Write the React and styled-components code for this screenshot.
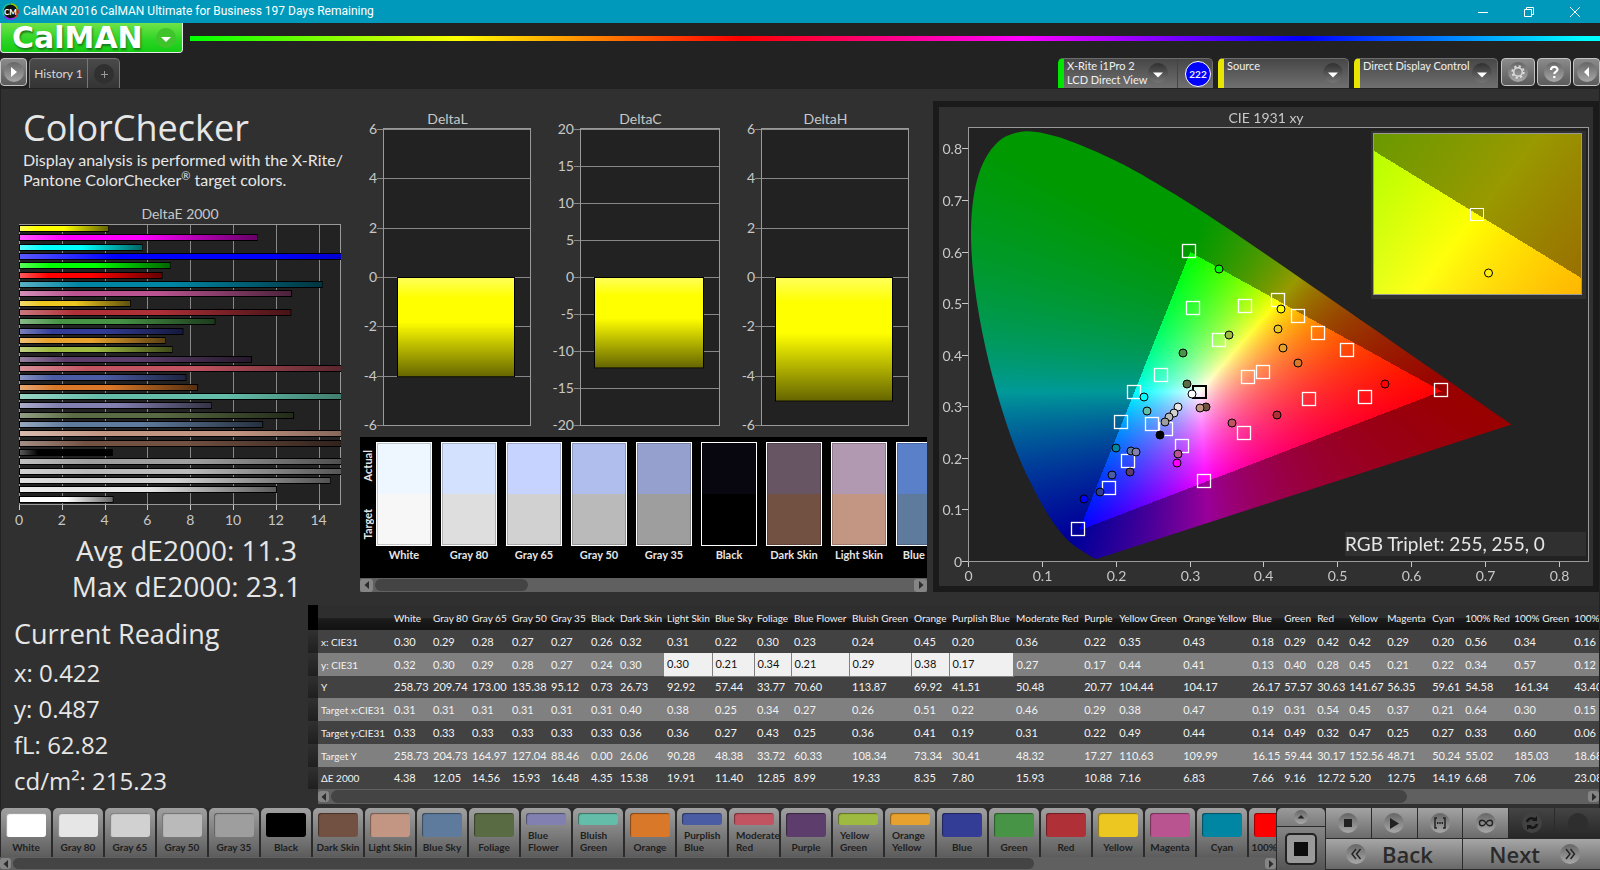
import React, { useEffect, useRef } from "react";
import styled, { createGlobalStyle, css } from "styled-components";

const Global = createGlobalStyle`
  *, *::before, *::after { box-sizing: border-box; }
  body { margin: 0; background: #222; color: #e6e6e6; font-family: "Open Sans", "Noto Sans", sans-serif; }
  button { font: inherit; color: inherit; padding: 0; margin: 0; border: 0; background: none; cursor: pointer; }
`;

const sans = '"Open Sans", "Noto Sans", sans-serif';
const humanist = 'Lato, "Open Sans", sans-serif';

/* ---------- data ---------- */

const patches = [
  { name: "White", color: "#ffffff", actual: "#eef7ff", target: "#f7f7f7", w: 39, v: ["0.30", "0.32", "258.73", "0.31", "0.33", "258.73", "4.38"] },
  { name: "Gray 80", color: "#e6e6e6", actual: "#d3e1ff", target: "#dedede", w: 39, v: ["0.29", "0.30", "209.74", "0.31", "0.33", "204.73", "12.05"] },
  { name: "Gray 65", color: "#d1d1d1", actual: "#c6d3ff", target: "#d1d1d1", w: 40, v: ["0.28", "0.29", "173.00", "0.31", "0.33", "164.97", "14.56"] },
  { name: "Gray 50", color: "#bababa", actual: "#b0beed", target: "#bababa", w: 39, v: ["0.27", "0.28", "135.38", "0.31", "0.33", "127.04", "15.93"] },
  { name: "Gray 35", color: "#9e9e9e", actual: "#95a0cf", target: "#9e9e9e", w: 40, v: ["0.27", "0.27", "95.12", "0.31", "0.33", "88.46", "16.48"] },
  { name: "Black", color: "#000000", actual: "#08060f", target: "#000000", w: 29, v: ["0.26", "0.24", "0.73", "0.31", "0.33", "0.00", "4.35"] },
  { name: "Dark Skin", color: "#735142", actual: "#675564", target: "#735142", w: 47, v: ["0.32", "0.30", "26.73", "0.40", "0.36", "26.06", "15.38"] },
  { name: "Light Skin", color: "#c29682", actual: "#b199b1", target: "#c29682", w: 48, v: ["0.31", "0.30", "92.92", "0.38", "0.36", "90.28", "19.91"] },
  { name: "Blue Sky", color: "#5e7a9c", actual: "#5a80ca", target: "#5e7a9c", w: 42, v: ["0.22", "0.21", "57.44", "0.25", "0.27", "48.38", "11.40"] },
  { name: "Foliage", color: "#596b42", w: 37, v: ["0.30", "0.34", "33.77", "0.34", "0.43", "33.72", "12.85"] },
  { name: "Blue Flower", two: true, color: "#8280b0", w: 58, v: ["0.23", "0.21", "70.60", "0.27", "0.25", "60.33", "8.99"] },
  { name: "Bluish Green", two: true, color: "#63bda8", w: 62, v: ["0.24", "0.29", "113.87", "0.26", "0.36", "108.34", "19.33"] },
  { name: "Orange", color: "#d97829", w: 38, v: ["0.45", "0.38", "69.92", "0.51", "0.41", "73.34", "8.35"] },
  { name: "Purplish Blue", two: true, color: "#4a5ca3", w: 64, v: ["0.20", "0.17", "41.51", "0.22", "0.19", "30.41", "7.80"] },
  { name: "Moderate Red", two: true, color: "#c25461", w: 68, v: ["0.36", "0.27", "50.48", "0.46", "0.31", "48.32", "15.93"] },
  { name: "Purple", color: "#5c3d6b", w: 35, v: ["0.22", "0.17", "20.77", "0.29", "0.22", "17.27", "10.88"] },
  { name: "Yellow Green", two: true, color: "#9eba40", w: 64, v: ["0.35", "0.44", "104.44", "0.38", "0.49", "110.63", "7.16"] },
  { name: "Orange Yellow", two: true, color: "#e6a12e", w: 69, v: ["0.43", "0.41", "104.17", "0.47", "0.44", "109.99", "6.83"] },
  { name: "Blue", color: "#333d96", w: 32, v: ["0.18", "0.13", "26.17", "0.19", "0.14", "16.15", "7.66"] },
  { name: "Green", color: "#479447", w: 33, v: ["0.29", "0.40", "57.57", "0.31", "0.49", "59.44", "9.16"] },
  { name: "Red", color: "#b03038", w: 32, v: ["0.42", "0.28", "30.63", "0.54", "0.32", "30.17", "12.72"] },
  { name: "Yellow", color: "#edc721", w: 38, v: ["0.42", "0.45", "141.67", "0.45", "0.47", "152.56", "5.20"] },
  { name: "Magenta", color: "#ba5491", w: 45, v: ["0.29", "0.21", "56.35", "0.37", "0.25", "48.71", "12.75"] },
  { name: "Cyan", color: "#0085a3", w: 33, v: ["0.20", "0.22", "59.61", "0.21", "0.27", "50.24", "14.19"] },
  { name: "100% Red", color: "#ff0000", w: 49, v: ["0.56", "0.34", "54.58", "0.64", "0.33", "55.02", "6.68"] },
  { name: "100% Green", color: "#00ff00", w: 60, v: ["0.34", "0.57", "161.34", "0.30", "0.60", "185.03", "7.06"] },
  { name: "100% Blue", color: "#0000ff", w: 68, v: ["0.16", "0.12", "43.40", "0.15", "0.06", "18.68", "23.08"] },
];
const rowNames = ["x: CIE31", "y: CIE31", "Y", "Target x:CIE31", "Target y:CIE31", "Target Y", "ΔE 2000"];

const deltaE = [
  ["#ffff00", 4.16], ["#ff00ff", 11.15], ["#00ffff", 5.75],
  ...patches.map((p) => [p.color, parseFloat(p.v[6])]).reverse(),
];

const cieTargets = [
  [250, 144], [254, 201], [306, 199], [280, 233], [222, 268], [195, 285], [309, 270], [324, 265],
  [182, 315], [213, 317], [227, 322], [243, 339], [189, 354], [170, 381], [139, 422], [265, 374],
  [305, 326], [339, 193], [359, 209], [379, 226], [408, 243], [370, 292], [426, 290], [502, 283],
];
const cieReadings = [
  [280, 162, "#00ff00"], [290, 228, "#9eba40"], [244, 246, "#479447"], [248, 277, "#596b42"],
  [253, 287, "#ffffff"], [267, 300, "#735142"], [261, 301, "#c29682"], [239, 300, "#e6e6e6"],
  [235, 306, "#d1d1d1"], [230, 310, "#bababa"], [226, 315, "#9e9e9e"], [221, 328, "#000000"],
  [205, 290, "#00ffff"], [208, 304, "#63bda8"], [177, 341, "#0085a3"], [192, 344, "#5e7a9c"],
  [197, 345, "#8280b0"], [191, 365, "#5c3d6b"], [173, 368, "#4a5ca3"], [161, 385, "#333d96"],
  [145, 392, "#0000ff"], [239, 347, "#ba5491"], [238, 356, "#ff00ff"], [293, 316, "#c25461"],
  [338, 308, "#b03038"], [342, 202, "#ffff00"], [339, 222, "#edc721"], [344, 241, "#e6a12e"],
  [359, 256, "#d97829"], [446, 277, "#ff0000"],
];
const locus = [
  [0.1741, 0.005], [0.1714, 0.0051], [0.1689, 0.0069], [0.1644, 0.0109], [0.1566, 0.0177], [0.144, 0.0297],
  [0.1355, 0.0399], [0.1241, 0.0578], [0.1096, 0.0868], [0.0913, 0.1327], [0.0687, 0.2007], [0.0454, 0.295],
  [0.0235, 0.4127], [0.0082, 0.5384], [0.0039, 0.6548], [0.0139, 0.7502], [0.0389, 0.812], [0.0743, 0.8338],
  [0.1142, 0.8262], [0.1547, 0.8059], [0.1929, 0.7816], [0.2296, 0.7543], [0.3016, 0.6923], [0.3731, 0.6245],
  [0.4441, 0.5547], [0.5125, 0.4866], [0.5752, 0.4242], [0.627, 0.3725], [0.6658, 0.334], [0.6915, 0.3083],
  [0.719, 0.2809], [0.7347, 0.2653],
];

/* ---------- window frame ---------- */

const Page = styled.div`
  min-height: 100vh;
  display: flex;
  flex-direction: column;
  overflow: hidden;
  background: #222;
`;
const TitleBar = styled.header`
  height: 23px;
  display: flex;
  align-items: center;
  padding-left: 2px;
  background: #0099bc;
  color: #fff;
  font: 12px/23px Roboto, sans-serif;
`;
const TitleText = styled.h1`
  flex: 1;
  margin: 0 0 0 4px;
  font: inherit;
`;
const WindowButtons = styled.div`
  display: flex;
  padding-right: 2px;
  button { width: 46px; height: 23px; display: grid; place-items: center; }
`;
const BrandBar = styled.div`
  height: 35px;
  display: flex;
  align-items: flex-start;
  gap: 7px;
`;
const BrandButton = styled.button`
  width: 183px;
  height: 30px;
  display: flex;
  align-items: center;
  justify-content: space-between;
  padding: 0 6px 0 11px;
  border: solid #e9e9e9;
  border-width: 0 1px 1px;
  border-radius: 0 0 4px 4px;
  background: linear-gradient(#6fe34a, #2bd423 60%, #14cc14);
  color: #fff;
  font: 700 30px/29px "DejaVu Sans", sans-serif;
  text-shadow: 1px 2px 2px #1b7a1b;
`;
const Spectrum = styled.div`
  flex: 1;
  height: 5px;
  margin-top: 13px;
  background: linear-gradient(90deg, #0f0, #ff0 19%, #f00 39%, #f0f 59%, #00f 79%, #0ff 99%);
`;
const TabBar = styled.nav`
  height: 31px;
  display: flex;
  align-items: flex-start;
`;
const TabSpacer = styled.div`
  flex: 1;
`;
const SquareButton = styled.button`
  width: ${(p) => p.$w}px;
  height: 28px;
  margin-right: ${(p) => p.$gap || 0}px;
  display: grid;
  place-items: center;
  border: 1px solid #c4c4c4;
  border-radius: 4px;
  background: linear-gradient(#8b8b8b, #5b5b5b);
`;
const TabGroup = styled.div`
  display: flex;
  height: 30px;
  border: 1px solid #777;
  border-bottom: 0;
  border-radius: 5px 5px 0 0;
  background: linear-gradient(#4a4a4a, #343434);
  font: 12px/29px ${humanist};
  color: #d8d8d8;
`;
const HistoryTab = styled.button`
  width: 57px;
`;
const AddTab = styled.button`
  width: 32px;
  display: grid;
  place-items: center;
  border-left: 1px solid #777;
`;
const Device = styled.button`
  width: ${(p) => p.$w}px;
  height: 30px;
  margin-right: ${(p) => p.$gap}px;
  display: flex;
  align-items: flex-start;
  overflow: hidden;
  border: 1px solid #6d6d6d;
  border-bottom: 0;
  border-left: 6px solid ${(p) => p.$accent};
  border-radius: 5px 5px 0 0;
  background: linear-gradient(#474747, #707070);
  padding-left: 3px;
  font: 11px/14px ${humanist};
  color: #f0f0f0;
  text-align: left;
`;
const DeviceText = styled.span`
  flex: 1;
  white-space: nowrap;
`;
const DeviceArrow = styled.span`
  flex: none;
  padding: 4px 5px 0 0;
  line-height: 0;
`;
const Counter = styled.span`
  flex: none;
  height: 30px;
  display: grid;
  place-items: center;
  border-left: 1px solid #444;
  padding: 0 1px 0 7px;
  margin-left: 4px;
  span {
    width: 26px;
    height: 26px;
    border: 1px solid #fff;
    border-radius: 50%;
    background: #00f;
    font: 700 10px/24px ${humanist};
    text-align: center;
  }
`;

/* ---------- work area ---------- */

const Workspace = styled.main`
  flex: 1;
  margin: 0 1px 0 1px;
  display: flex;
  flex-direction: column;
  background: #303030;
`;
const Analysis = styled.section`
  display: grid;
  grid-template-columns: minmax(0, 350fr) minmax(0, 582fr) minmax(0, 666fr);
  align-items: start;
`;
const Summary = styled.div`
  padding-top: 17px;
`;
const Heading = styled.h2`
  margin: 0 0 0 22px;
  font: 400 36px/44px ${sans};
  white-space: nowrap;
`;
const Blurb = styled.p`
  margin: 0 0 12px 22px;
  font: 16px/20px ${humanist};
  white-space: nowrap;
  sup { font-size: 11px; line-height: 1px; }
`;
const Chart = styled.svg`
  display: block;
  width: 100%;
  text { fill: #c8c8c8; font-family: ${humanist}; font-size: 14px; }
`;
const Totals = styled.div`
  padding: 2px 29px 1px 50px;
  text-align: center;
  font: 28px/36px ${sans};
  white-space: nowrap;
`;
const Middle = styled.div`
  padding: 19px 6px 0 9px;
`;
const Comparator = styled.div`
  display: flex;
  height: 141px;
  overflow: hidden;
  background: #000;
`;
const SideLabels = styled.div`
  flex: none;
  width: 16px;
  display: flex;
  flex-direction: column;
  padding-bottom: 26px;
  font: 700 11px/16px ${humanist};
  span { flex: 1; writing-mode: vertical-rl; transform: rotate(180deg); text-align: center; }
`;
const Pair = styled.figure`
  flex: none;
  width: 56px;
  margin: 5px 9px 0 0;
  font: 700 11px/17px ${humanist};
  text-align: center;
  white-space: nowrap;
`;
const PairSwatch = styled.div`
  height: 104px;
  border: 1px solid #fff;
  background: linear-gradient(${(p) => p.$actual} 50%, ${(p) => p.$target} 50%);
  box-shadow: inset 0 0 0 1px #0003;
`;
const ScrollTrack = styled.div`
  height: ${(p) => p.$h}px;
  display: flex;
  align-items: center;
  justify-content: space-between;
  background: #606060;
`;
const ScrollArrow = styled.button`
  flex: none;
  width: ${(p) => p.$s}px;
  height: ${(p) => p.$s}px;
  display: grid;
  place-items: center;
  border-radius: 3px;
  background: #858585;
`;
const ScrollThumb = styled.div`
  width: ${(p) => p.$w};
  height: calc(100% - 2px);
  margin: 0 auto 0 2px;
  border-radius: 7px;
  background: #444;
`;
const CieFrame = styled.div`
  margin-top: 12px;
  padding: 6px;
  background: #1a1a1a;
`;
const CieStack = styled.div`
  display: grid;
  background: #303030;
  > * { grid-area: 1 / 1; width: 100%; height: auto; }
`;

/* ---------- results table ---------- */

const Results = styled.section`
  display: grid;
  grid-template-columns: 307px minmax(0, 1fr);
  padding-bottom: 3px;
`;
const Reading = styled.div`
  padding: 11px 0 0 13px;
  font: 24px/36px ${sans};
  h3 { margin: 0 0 3px; font: 27px/36px ${sans}; }
`;
const TableBox = styled.div`
  overflow: hidden;
`;
const Table = styled.table`
  width: 1332px;
  table-layout: fixed;
  border-collapse: collapse;
  font: 11px/20px ${humanist};
  white-space: nowrap;
  color: #f2f2f2;
  th, td { padding: 0 0 0 3px; font-weight: 400; text-align: left; }
  th { font-size: 10px; }
`;
const HeadRow = styled.tr`
  height: 25px;
  background: linear-gradient(#2e2e2e 50%, #1c1c1c 55%, #111);
  td:first-child { background: #000; }
`;
const DataRow = styled.tr`
  height: 23px;
  background: ${(p) => (p.$light ? "#808080" : "#424242")};
  &:nth-child(4n + 3) { height: 22px; }
  td:first-child { background: linear-gradient(#303030, #1f1f1f); }
`;
const Cell = styled.td`
  ${(p) =>
    p.$selected &&
    css`
      background: #f0f0f0;
      color: #111;
      border-right: 1px solid #808080;
      border-bottom: 1px solid #808080;
    `}
`;
const TableScroll = styled.div`
  margin-left: 10px;
`;

/* ---------- bottom bar ---------- */

const Dock = styled.footer`
  height: 62px;
  display: flex;
  background: #2b2b2b;
`;
const Patches = styled.div`
  flex: 1;
  min-width: 0;
  overflow: hidden;
`;
const PatchRow = styled.div`
  display: flex;
  gap: 2px;
  padding-left: 1px;
`;
const PatchButton = styled.button`
  flex: none;
  width: 50px;
  height: 49px;
  display: flex;
  flex-direction: column;
  align-items: center;
  padding-top: 5px;
  border-radius: 5px 5px 0 0;
  background: linear-gradient(#a0a0a0, #5c5c5c);
  color: #1e1e1e;
  font: 700 10px/12px ${humanist};
`;
const PatchColor = styled.span`
  width: 40px;
  height: ${(p) => (p.$short ? 12 : 24)}px;
  margin-bottom: 4px;
  border-radius: 3px;
  background: ${(p) => p.$c};
  box-shadow: inset 1px 1px 1px #0006;
`;
const PatchName = styled.span`
  width: ${(p) => (p.$wrap ? "36px" : "auto")};
  text-align: left;
  white-space: ${(p) => (p.$wrap ? "normal" : "nowrap")};
`;
const Layout = styled.div`
  width: 48px;
  margin: 0 1px;
  display: grid;
  grid-template-rows: 18px 1fr;
  gap: 1px;
  button { display: grid; place-items: center; background: linear-gradient(#9a9a9a, #7b7b7b); }
  button:first-child { border-radius: 5px 5px 0 0; }
  button:last-child { background: linear-gradient(#858585, #555); }
`;
const Controls = styled.div`
  width: 274px;
  display: grid;
  grid-template-columns: repeat(6, 1fr);
  grid-template-rows: 30px 30px;
  gap: 1px;
`;
const Transport = styled.button`
  display: grid;
  place-items: center;
  background: ${(p) => (p.disabled ? "linear-gradient(#444, #272727)" : "linear-gradient(#a3a3a3, #6b6b6b)")};
`;
const StepButton = styled.button`
  grid-column: span 3;
  display: flex;
  align-items: center;
  justify-content: ${(p) => (p.$end ? "flex-end" : "flex-start")};
  gap: ${(p) => (p.$end ? 20 : 16)}px;
  padding: 0 20px;
  background: linear-gradient(#a6a6a6, #686868);
  color: #2a2a2a;
  font: 600 22px/30px ${sans};
`;

/* ---------- icons ---------- */

function Disc({ size = 20, dark, children }) {
  const id = dark ? "discDark" : "discLight";
  return (
    <svg width={size} height={size} viewBox="0 0 20 20" aria-hidden="true">
      <defs>
        <linearGradient id={id} x1="0" y1="0" x2="0" y2="1">
          <stop offset="0" stopColor={dark ? "#303030" : "#666"} />
          <stop offset="1" stopColor={dark ? "#757575" : "#a8a8a8"} />
        </linearGradient>
      </defs>
      <circle cx="10" cy="10" r="10" fill={`url(#${id})`} />
      {children}
    </svg>
  );
}
const DownArrow = () => (
  <Disc dark><path d="M5 9.500h10L10 14.500z" fill="#fff" /></Disc>
);
const Tri = ({ right }) => (
  <svg width="6" height="8" viewBox="0 0 6 8" aria-hidden="true">
    <path d={right ? "M1 0v8l4.500-4z" : "M5 0v8L.5 4z"} fill="#2c2c2c" />
  </svg>
);

function Scrollbar({ h, s, thumb, label }) {
  return (
    <ScrollTrack $h={h}>
      <ScrollArrow $s={s} aria-label={`Scroll ${label} left`}><Tri /></ScrollArrow>
      <ScrollThumb $w={thumb} />
      <ScrollArrow $s={s} aria-label={`Scroll ${label} right`}><Tri right /></ScrollArrow>
    </ScrollTrack>
  );
}

/* ---------- charts ---------- */

function DeltaEChart() {
  const px = (v) => 19 + v * 21.4;
  return (
    <Chart viewBox="1 0 350 328" role="img" aria-label="DeltaE 2000">
      <defs>
        <linearGradient id="gloss" x1="0" x2="1">
          <stop offset="0" stopColor="#fff" stopOpacity=".35" />
          <stop offset=".2" stopColor="#fff" stopOpacity="0" />
          <stop offset=".5" stopColor="#000" stopOpacity="0" />
          <stop offset="1" stopColor="#000" stopOpacity=".6" />
        </linearGradient>
        <clipPath id="dePlot"><rect x="19" y="20" width="322" height="284" /></clipPath>
      </defs>
      <text x="180" y="17" textAnchor="middle">DeltaE 2000</text>
      <rect x="19.500" y="22.500" width="321" height="280" fill="#222" stroke="#999" />
      {[2, 4, 6, 8, 10, 12, 14].map((v) => (
        <line key={v} x1={Math.round(px(v)) + 0.5} x2={Math.round(px(v)) + 0.5} y1="23" y2="302" stroke="#888" />
      ))}
      <g clipPath="url(#dePlot)">
        {deltaE.map(([c, v], i) => (
          <g key={i}>
            <rect x="19.500" y={Math.round(23 + i * 9.33) + 0.5} width={v * 21.33} height="6" fill={c} stroke="#000" />
            <rect x="20" y={Math.round(23 + i * 9.33) + 1} width={v * 21.33 - 1} height="5" fill="url(#gloss)" />
          </g>
        ))}
      </g>
      {[0, 2, 4, 6, 8, 10, 12, 14].map((v) => (
        <g key={v}>
          <line x1={Math.round(px(v)) + 0.5} x2={Math.round(px(v)) + 0.5} y1="303" y2="308" stroke="#c8c8c8" />
          <text x={px(v)} y="323" textAnchor="middle">{v}</text>
        </g>
      ))}
    </Chart>
  );
}

function DeltaBar({ title, x, w, max, step, value }) {
  const py = (v) => 169 - (v / max) * 148;
  const ticks = [];
  for (let v = max; v >= -max; v -= step) ticks.push(v);
  return (
    <g>
      <text x={x + w / 2 - 9} y="16" textAnchor="middle">{title}</text>
      <rect x={x} y="21" width={w} height="296" fill="#222" />
      {ticks.map((v) => (
        <g key={v}>
          <line x1={x - 6} x2={x + w} y1={Math.round(py(v)) + 0.5} y2={Math.round(py(v)) + 0.5} stroke="#888" />
          <text x={x - 6} y={py(v) + 5} textAnchor="end">{v}</text>
        </g>
      ))}
      <rect x={x + 0.5} y="20.500" width={w} height="297" fill="none" stroke="#999" />
      <rect x={x + 14.5} y="169.500" width={w - 30} height={py(value) - 169} fill="#ff0" stroke="#000" />
      <rect x={x + 15} y="170" width={w - 31} height={py(value) - 170} fill="url(#glossV)" />
    </g>
  );
}

function DeltaCharts() {
  return (
    <Chart viewBox="0 0 567 329" role="img" aria-label="DeltaL, DeltaC and DeltaH">
      <defs>
        <linearGradient id="glossV" x1="0" x2="0" y1="0" y2="1">
          <stop offset="0" stopColor="#fff" stopOpacity=".35" />
          <stop offset=".2" stopColor="#fff" stopOpacity="0" />
          <stop offset=".45" stopColor="#000" stopOpacity="0" />
          <stop offset="1" stopColor="#000" stopOpacity=".6" />
        </linearGradient>
      </defs>
      <DeltaBar title="DeltaL" x={23} w={147} max={6} step={2} value={-4.02} />
      <DeltaBar title="DeltaC" x={220} w={139} max={20} step={5} value={-12.2} />
      <DeltaBar title="DeltaH" x={401} w={147} max={6} step={2} value={-5} />
    </Chart>
  );
}

const ORIGIN_X = 29.3;
const ORIGIN_Y = 454.3;
const SCALE_X = 739.3;
const SCALE_Y = 515.4;

function chromaColor(x, y) {
  const z = 1 - x - y;
  let r = 3.2406 * x - 1.5372 * y - 0.4986 * z;
  let g = -0.9689 * x + 1.8758 * y + 0.0415 * z;
  let b = 0.0557 * x - 0.204 * y + 1.057 * z;
  const level = r < 0 || g < 0 || b < 0 ? 153 : 255;
  r = Math.max(r, 0);
  g = Math.max(g, 0);
  b = Math.max(b, 0);
  const k = level / Math.max(r, g, b);
  return [r * k, g * k, b * k];
}

function paintField(width, height, toXY) {
  const layer = document.createElement("canvas");
  layer.width = width;
  layer.height = height;
  const c = layer.getContext("2d");
  const image = c.createImageData(width, height);
  for (let j = 0; j < height; j++) {
    for (let i = 0; i < width; i++) {
      const [x, y] = toXY(i + 0.5, j + 0.5);
      const [r, g, b] = chromaColor(x, y);
      const o = (j * width + i) * 4;
      image.data[o] = r;
      image.data[o + 1] = g;
      image.data[o + 2] = b;
      image.data[o + 3] = 255;
    }
  }
  c.putImageData(image, 0, 0);
  return layer;
}

function CieChart() {
  const ref = useRef(null);
  useEffect(() => {
    const c = ref.current.getContext("2d");
    c.clearRect(0, 0, 654, 479);
    c.fillStyle = "#222";
    c.fillRect(29, 21, 621, 433);
    const pts = locus.map(([x, y]) => [ORIGIN_X + x * SCALE_X, ORIGIN_Y - y * SCALE_Y]);
    c.save();
    c.beginPath();
    c.moveTo(pts[0][0], pts[0][1]);
    for (let i = 0; i < pts.length - 1; i++) {
      const p0 = pts[Math.max(i - 1, 0)];
      const p1 = pts[i];
      const p2 = pts[i + 1];
      const p3 = pts[Math.min(i + 2, pts.length - 1)];
      c.bezierCurveTo(
        p1[0] + (p2[0] - p0[0]) / 6, p1[1] + (p2[1] - p0[1]) / 6,
        p2[0] - (p3[0] - p1[0]) / 6, p2[1] - (p3[1] - p1[1]) / 6,
        p2[0], p2[1]
      );
    }
    c.closePath();
    c.clip();
    c.drawImage(paintField(654, 479, (i, j) => [(i - ORIGIN_X) / SCALE_X, (ORIGIN_Y - j) / SCALE_Y]), 0, 0);
    c.restore();
    c.fillStyle = "#303030";
    c.fillRect(432, 24, 215, 168);
    c.drawImage(paintField(209, 162, (i, j) => [0.4193 + (i - 104) / 4176, 0.5053 - (j - 81) / 3224]), 434, 26);
  }, []);
  return (
    <CieStack>
      <canvas ref={ref} width="654" height="479" />
      <Chart viewBox="0 0 654 479" role="img" aria-label="CIE 1931 xy chromaticity diagram">
        <text x="327" y="16" textAnchor="middle">CIE 1931 xy</text>
        <rect x="29.500" y="20.500" width="620" height="434" fill="none" stroke="#999" />
        {[0, 1, 2, 3, 4, 5, 6, 7, 8].map((n) => {
          const tx = Math.floor(ORIGIN_X + n * 73.9) + 0.5;
          const ty = Math.floor(ORIGIN_Y - n * 51.54) + 0.5;
          return (
            <g key={n}>
              <path d={`M${tx} 455v5M29 ${ty}h-6`} stroke="#c8c8c8" />
              <text x={tx} y="474" textAnchor="middle">{n ? `0.${n}` : "0"}</text>
              <text x="23" y={ty + 5} textAnchor="end">{n ? `0.${n}` : "0"}</text>
            </g>
          );
        })}
        {cieTargets.map(([x, y], i) => (
          <rect key={i} x={x - 6.5} y={y - 6.5} width="13" height="13" fill="none" stroke="#fff" strokeWidth="1.3" />
        ))}
        <rect x="254" y="279" width="13" height="12" fill="none" stroke="#000" strokeWidth="2" />
        {cieReadings.map(([x, y, c], i) => (
          <circle key={i} cx={x} cy={y} r="4" fill={c} stroke="#000" />
        ))}
        <rect x="434.500" y="26.500" width="208" height="161" fill="none" stroke="#999" />
        <rect x="531.500" y="101.500" width="13" height="12" fill="none" stroke="#fff" />
        <circle cx="549.500" cy="166" r="4" fill="#ffee10" stroke="#000" />
        <rect x="406" y="425" width="241" height="24" fill="#303030" />
        <text x="406" y="444" style={{ fontSize: 19, fill: "#e6e6e6" }}>RGB Triplet: 255, 255, 0</text>
      </Chart>
    </CieStack>
  );
}

/* ---------- page ---------- */

export default function App() {
  return (
    <Page>
      <Global />
      <TitleBar>
        <svg width="17" height="17" viewBox="0 0 17 17" aria-hidden="true">
          <circle cx="8.500" cy="8.500" r="8" fill="#111" />
          <path d="M8.500 1a7.500 7.500 0 0 1 7 5" stroke="#9c0" strokeWidth="1.500" fill="none" />
          <path d="M15.500 6a7.500 7.500 0 0 1-3 9" stroke="#e33" strokeWidth="1.500" fill="none" />
          <path d="M12.500 15a7.500 7.500 0 0 1-10-2" stroke="#93f" strokeWidth="1.500" fill="none" />
          <path d="M2.500 13a7.500 7.500 0 0 1 6-12" stroke="#2c9" strokeWidth="1.500" fill="none" />
          <text x="8.500" y="11.500" textAnchor="middle" fill="#fff" fontFamily="Lato, sans-serif" fontWeight="900" fontSize="8">CM</text>
        </svg>
        <TitleText>CalMAN 2016 CalMAN Ultimate for Business 197 Days Remaining</TitleText>
        <WindowButtons>
          <button aria-label="Minimize"><svg width="10" height="10"><path d="M0 5.500h10" stroke="#fff" /></svg></button>
          <button aria-label="Restore">
            <svg width="10" height="10"><path d="M.5 2.500h7v7h-7zM2.500 2.500v-2h7v7h-2" fill="none" stroke="#fff" /></svg>
          </button>
          <button aria-label="Close"><svg width="10" height="10"><path d="M0 0l10 10M10 0L0 10" stroke="#fff" /></svg></button>
        </WindowButtons>
      </TitleBar>

      <BrandBar>
        <BrandButton aria-label="CalMAN menu">
          CalMAN
          <svg width="20" height="20" aria-hidden="true">
            <circle cx="10" cy="10" r="10" fill="#3fc42c" />
            <path d="M5 9h10l-5 5z" fill="#fff" />
          </svg>
        </BrandButton>
        <Spectrum />
      </BrandBar>

      <TabBar>
        <SquareButton $w={27} $gap={2} aria-label="Expand panel">
          <Disc><path d="M7 5v10l6-5z" fill="#fff" /></Disc>
        </SquareButton>
        <TabGroup>
          <HistoryTab>History 1</HistoryTab>
          <AddTab aria-label="Add history">
            <svg width="20" height="20"><circle cx="10" cy="10" r="10" fill="#303030" /><path d="M7 10.500h7M10.500 7v7" stroke="#999" /></svg>
          </AddTab>
        </TabGroup>
        <TabSpacer />
        <Device $w={155} $gap={5} $accent="#00e600">
          <DeviceText>X-Rite i1Pro 2<br />LCD Direct View</DeviceText>
          <DeviceArrow><DownArrow /></DeviceArrow>
          <Counter><span>222</span></Counter>
        </Device>
        <Device $w={131} $gap={5} $accent="#e6e600">
          <DeviceText>Source</DeviceText>
          <DeviceArrow><DownArrow /></DeviceArrow>
        </Device>
        <Device $w={144} $gap={3} $accent="#e6e600">
          <DeviceText>Direct Display Control</DeviceText>
          <DeviceArrow><DownArrow /></DeviceArrow>
        </Device>
        <SquareButton $w={34} $gap={2} aria-label="Settings">
          <Disc>
            <circle cx="10" cy="10" r="4.300" fill="none" stroke="#ddd" strokeWidth="1.500" />
            <circle cx="10" cy="10" r="5.800" fill="none" stroke="#ddd" strokeWidth="1.800" strokeDasharray="2.200 2.350" />
          </Disc>
        </SquareButton>
        <SquareButton $w={34} $gap={2} aria-label="Help">
          <Disc>
            <path d="M7 8c0-4 6.500-4 6.500-.5 0 2.200-3.200 2-3.200 4.500" fill="none" stroke="#fff" strokeWidth="2.200" />
            <circle cx="10.300" cy="15" r="1.300" fill="#fff" />
          </Disc>
        </SquareButton>
        <SquareButton $w={27} aria-label="Collapse panel">
          <Disc><path d="M12 5v10l-5-5z" fill="#fff" /></Disc>
        </SquareButton>
      </TabBar>

      <Workspace>
        <Analysis>
          <Summary>
            <Heading>ColorChecker</Heading>
            <Blurb>Display analysis is performed with the X-Rite/<br />Pantone ColorChecker<sup>®</sup> target colors.</Blurb>
            <DeltaEChart />
            <Totals>Avg dE2000: 11.3<br />Max dE2000: 23.1</Totals>
          </Summary>
          <Middle>
            <DeltaCharts />
            <Comparator>
              <SideLabels><span>Actual</span><span>Target</span></SideLabels>
              {patches.slice(0, 9).map((p) => (
                <Pair key={p.name}>
                  <PairSwatch $actual={p.actual} $target={p.target} />
                  <figcaption>{p.name}</figcaption>
                </Pair>
              ))}
            </Comparator>
            <Scrollbar h={14} s={13} thumb="27%" label="comparator" />
          </Middle>
          <CieFrame><CieChart /></CieFrame>
        </Analysis>

        <Results>
          <Reading>
            <h3>Current Reading</h3>
            <div>x: 0.422</div>
            <div>y: 0.487</div>
            <div>fL: 62.82</div>
            <div>cd/m²: 215.23</div>
          </Reading>
          <TableBox>
            <Table>
              <colgroup>
                <col style={{ width: 10 }} />
                <col style={{ width: 73 }} />
                {patches.map((p) => <col key={p.name} style={{ width: p.w }} />)}
              </colgroup>
              <thead>
                <HeadRow>
                  <td />
                  <td />
                  {patches.map((p) => <th key={p.name} scope="col">{p.name}</th>)}
                </HeadRow>
              </thead>
              <tbody>
                {rowNames.map((name, r) => (
                  <DataRow key={name} $light={r % 2 === 1 && r < 6}>
                    <td />
                    <th scope="row">{name}</th>
                    {patches.map((p, i) => (
                      <Cell key={p.name} $selected={r === 1 && i > 6 && i < 14}>{p.v[r]}</Cell>
                    ))}
                  </DataRow>
                ))}
              </tbody>
            </Table>
            <TableScroll><Scrollbar h={15} s={11} thumb="84%" label="table" /></TableScroll>
          </TableBox>
        </Results>
      </Workspace>

      <Dock>
        <Patches>
          <PatchRow>
            {patches.slice(0, 25).map((p) => (
              <PatchButton key={p.name}>
                <PatchColor $c={p.color} $short={p.two} />
                <PatchName $wrap={p.two}>{p.name}</PatchName>
              </PatchButton>
            ))}
          </PatchRow>
          <Scrollbar h={13} s={11} thumb="80%" label="patches" />
        </Patches>
        <Layout>
          <button aria-label="Expand bar"><Disc size={14}><path d="M5 12h10l-5-5z" fill="#222" /></Disc></button>
          <button aria-label="Pattern window">
            <svg width="32" height="32"><rect x="1" y="1" width="30" height="30" rx="4" fill="#999" stroke="#222" strokeWidth="2" /><rect x="9" y="9" width="14" height="14" fill="#0c0c0c" /></svg>
          </button>
        </Layout>
        <Controls>
          <Transport aria-label="Stop"><Disc><path d="M6 6h8v8H6z" fill="#222" /></Disc></Transport>
          <Transport aria-label="Read"><Disc><path d="M6 5v11l9-5.500z" fill="#222" /></Disc></Transport>
          <Transport aria-label="Read series">
            <Disc><path d="M7 5H5v10h2M13 5h2v10h-2" fill="none" stroke="#222" strokeWidth="1.500" /><path d="M7 10h6" stroke="#222" strokeWidth="2" strokeDasharray="1.400 .9" /></Disc>
          </Transport>
          <Transport aria-label="Read continuously">
            <Disc><path d="M10 10c-2-3.600-6.500-3.600-6.500 0s4.500 3.600 6.500 0 6.500-3.600 6.500 0-4.500 3.600-6.500 0z" fill="none" stroke="#222" strokeWidth="1.400" /></Disc>
          </Transport>
          <Transport disabled aria-label="Refresh">
            <svg width="20" height="20"><circle cx="10" cy="10" r="10" fill="#424242" /><path d="M5 9c1-4 6-5 8-2M15 11c-1 4-6 5-8 2" fill="none" stroke="#161616" strokeWidth="2.300" /><path d="M15 3v5h-5zM5 17v-5h5z" fill="#161616" /></svg>
          </Transport>
          <Transport disabled aria-label="Record"><svg width="20" height="20"><circle cx="10" cy="10" r="10" fill="#2e2e2e" /></svg></Transport>
          <StepButton>
            <Disc><path d="M10 5l-4 5 4 5M14.500 5l-4 5 4 5" fill="none" stroke="#222" strokeWidth="1.400" /></Disc>
            Back
          </StepButton>
          <StepButton $end>
            Next
            <Disc><path d="M6 5l4 5-4 5M10.500 5l4 5-4 5" fill="none" stroke="#222" strokeWidth="1.400" /></Disc>
          </StepButton>
        </Controls>
      </Dock>
    </Page>
  );
}
